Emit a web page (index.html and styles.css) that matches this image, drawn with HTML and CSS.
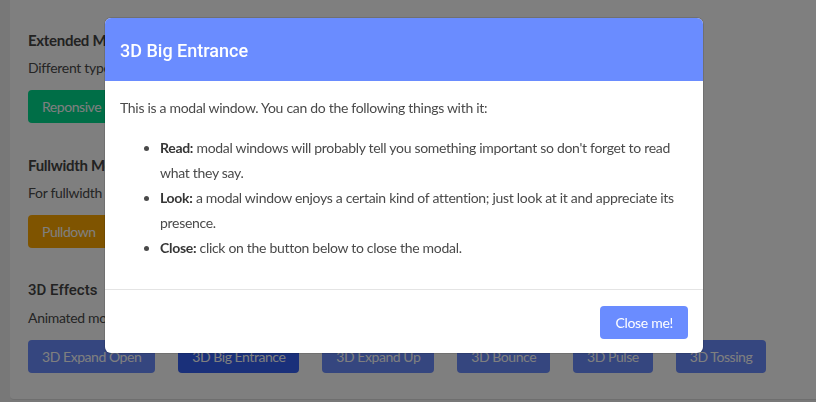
FILE: index.html
```html
<!DOCTYPE html>
<html lang="en">
<head>
<meta charset="utf-8">
<title>Modals</title>
<link rel="stylesheet" href="styles.css">
</head>
<body>
<div class="page">
  <main class="card">
    <section class="group">
      <h3 class="group-title">Extended Modals</h3>
      <p class="group-text">Different types of extended modal windows with many options.</p>
      <div class="btn-row">
        <button class="btn btn-green">Reponsive</button>
      </div>
    </section>
    <section class="group">
      <h3 class="group-title">Fullwidth Modals</h3>
      <p class="group-text">For fullwidth modal windows with many options.</p>
      <div class="btn-row">
        <button class="btn btn-amber">Pulldown</button>
      </div>
    </section>
    <section class="group">
      <h3 class="group-title roboto">3D Effects</h3>
      <p class="group-text">Animated modal windows with 3D effects.</p>
      <div class="btn-row">
        <button class="btn btn-blue">3D Expand Open</button>
        <button class="btn btn-blue active">3D Big Entrance</button>
        <button class="btn btn-blue">3D Expand Up</button>
        <button class="btn btn-blue">3D Bounce</button>
        <button class="btn btn-blue">3D Pulse</button>
        <button class="btn btn-blue">3D Tossing</button>
      </div>
    </section>
  </main>
</div>

<div class="overlay">
  <div class="modal">
    <header class="modal-head">
      <h2 class="modal-title">3D Big Entrance</h2>
    </header>
    <div class="modal-body">
      <p class="modal-intro">This is a modal window. You can do the following things with it:</p>
      <ul class="modal-list">
        <li><strong>Read:</strong> modal windows will probably tell you something important so don't forget to read what they say.</li>
        <li><strong>Look:</strong> a modal window enjoys a certain kind of attention; just look at it and appreciate its presence.</li>
        <li><strong>Close:</strong> click on the button below to close the modal.</li>
      </ul>
    </div>
    <footer class="modal-foot">
      <button class="btn-close">Close me!</button>
    </footer>
  </div>
</div>
</body>
</html>
```

FILE: styles.css
```css
* { box-sizing: border-box; }

html, body {
  margin: 0;
  height: 100%;
}

body {
  background: #f0f0f0;
  font-family: "Lato", "Liberation Sans", sans-serif;
  letter-spacing: -0.3px;
  color: #4a4a4a;
  overflow: hidden;
}

.page {
  padding-left: 10px;
  height: 402px;
}

.card {
  background: #fff;
  width: 830px;
  height: 400px;
  border-bottom: 1px solid #dcdcdc;
  border-radius: 0 0 4px 4px;
  padding: 30px 18px 0;
}

.group { margin-bottom: 32px; }

.group-title {
  margin: 0 0 8px;
  font-size: 15px;
  font-weight: 700;
  color: #444;
  line-height: 20px;
}

.group-title.roboto {
  font-family: "Roboto", sans-serif;
  font-weight: 500;
  letter-spacing: 0;
}

.group-text {
  margin: 0 0 12px;
  font-size: 14px;
  line-height: 20px;
  color: #4a4a4a;
}

.btn-row {
  display: flex;
  gap: 23px;
}

.btn {
  height: 33px;
  padding: 0 14px;
  border: 0;
  border-radius: 4px;
  font-family: "Lato", sans-serif;
  letter-spacing: -0.45px;
  font-size: 14px;
  color: #fff;
}

.btn-green { background: #00dc8f; }
.btn-amber { background: #ffa900; }
.btn-blue { background: #6a8cff; }
.btn-blue.active { background: #3461f5; }

.overlay {
  position: fixed;
  inset: 0;
  background: rgba(0, 0, 0, 0.5);
  padding: 18px 0 0 105px;
}

.modal {
  width: 598px;
  background: #fff;
  border-radius: 6px;
  overflow: hidden;
  box-shadow: 0 0 0 1px rgba(0, 0, 0, 0.12);
}

.modal-head {
  background: #6a8cff;
  height: 63px;
  padding: 0 15px;
  display: flex;
  align-items: center;
}

.modal-title {
  margin: 0;
  font-family: "Roboto", sans-serif;
  font-weight: 500;
  font-size: 18px;
  letter-spacing: 0;
  color: #fff;
  position: relative;
  top: 1px;
}

.modal-body {
  padding: 17px 15px 29px;
  border-bottom: 1px solid #e4e4e4;
  font-size: 14px;
  color: #4a4a4a;
}

.modal-intro {
  margin: 0 0 17px;
  line-height: 20px;
}

.modal-list {
  margin: 0;
  padding-left: 40px;
  line-height: 25px;
}

.modal-list strong { color: #363636; }

.modal-foot {
  height: 63px;
  padding: 0 15px;
  display: flex;
  align-items: center;
  justify-content: flex-end;
}

.btn-close {
  height: 33px;
  padding: 0 15px;
  border: 0;
  border-radius: 4px;
  background: #6a8cff;
  color: #fff;
  font-family: "Lato", sans-serif;
  letter-spacing: -0.3px;
  font-size: 14px;
  position: relative;
  top: 1px;
}
```
